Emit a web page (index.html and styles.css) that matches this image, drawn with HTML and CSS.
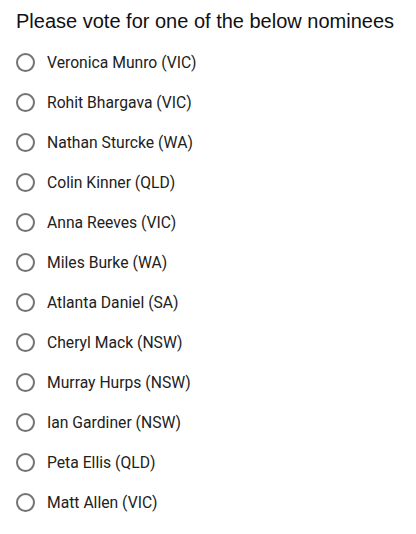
FILE: index.html
```html
<!DOCTYPE html>
<html>
<head>
<meta charset="utf-8">
<link rel="stylesheet" href="styles.css">
</head>
<body>
<div class="poll">
  <h1 class="title">Please vote for one of the below nominees</h1>
  <ul class="options">
    <li class="option"><span class="radio"></span><span class="label">Veronica Munro (VIC)</span></li>
    <li class="option"><span class="radio"></span><span class="label">Rohit Bhargava (VIC)</span></li>
    <li class="option"><span class="radio"></span><span class="label">Nathan Sturcke (WA)</span></li>
    <li class="option"><span class="radio"></span><span class="label">Colin Kinner (QLD)</span></li>
    <li class="option"><span class="radio"></span><span class="label">Anna Reeves (VIC)</span></li>
    <li class="option"><span class="radio"></span><span class="label">Miles Burke (WA)</span></li>
    <li class="option"><span class="radio"></span><span class="label">Atlanta Daniel (SA)</span></li>
    <li class="option"><span class="radio"></span><span class="label">Cheryl Mack (NSW)</span></li>
    <li class="option"><span class="radio"></span><span class="label">Murray Hurps (NSW)</span></li>
    <li class="option"><span class="radio"></span><span class="label">Ian Gardiner (NSW)</span></li>
    <li class="option"><span class="radio"></span><span class="label">Peta Ellis (QLD)</span></li>
    <li class="option"><span class="radio"></span><span class="label">Matt Allen (VIC)</span></li>
  </ul>
</div>
</body>
</html>
```
FILE: styles.css
```css
html, body {
  margin: 0;
  padding: 0;
  background: #ffffff;
}
.poll {
  padding: 6px 16px 0 16px;
}
.title {
  margin: 0;
  font-family: "Liberation Sans", Arial, sans-serif;
  font-weight: normal;
  font-size: 20px;
  line-height: 30px;
  color: #111111;
}
.options {
  list-style: none;
  margin: 6px 0 0 0;
  padding: 0;
}
.option {
  display: flex;
  align-items: center;
  height: 40px;
}
.radio {
  box-sizing: border-box;
  width: 19px;
  height: 19px;
  border: 2px solid #737373;
  border-radius: 50%;
  flex: none;
}
.label {
  margin-left: 12px;
  font-family: Roboto, "Liberation Sans", sans-serif;
  font-size: 15.7px;
  color: #212121;
}
```
